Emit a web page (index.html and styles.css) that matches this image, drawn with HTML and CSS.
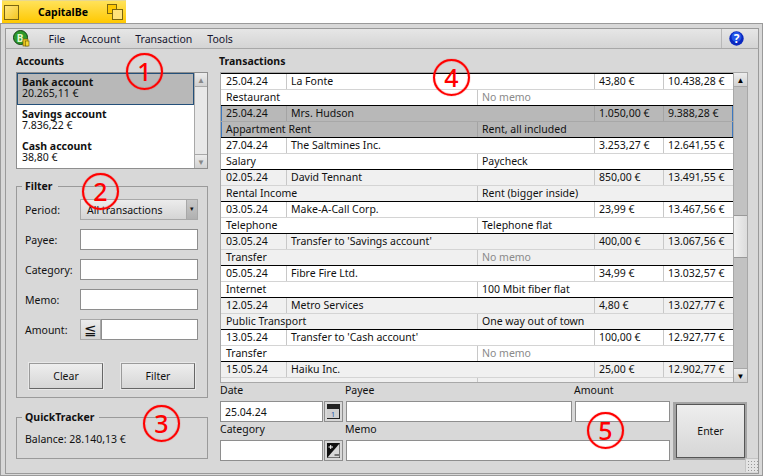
FILE: index.html
```html
<!DOCTYPE html>
<html lang="en">
  <head>
    <meta charset="UTF-8" />
    <meta name="viewport" content="width=device-width, initial-scale=1.0" />
    <title>CapitalBe</title>
    <link rel="stylesheet" href="styles.css">
  </head>
  <body>
    <div class="tab">
      <span class="tab-close"></span>
      <span class="tab-title">CapitalBe</span>
      <svg class="tab-zoom" width="16" height="16" viewBox="0 0 16 16">
        <rect x="0.5" y="0.5" width="9" height="9" fill="#ffc800" stroke="#7a6510" />
        <rect x="5.5" y="5.5" width="10" height="10" fill="#ffe27a" stroke="#7a6510" />
      </svg>
    </div>

    <div class="window">
      <div class="menubar">
        <svg class="app-icon" width="17" height="17" viewBox="0 0 17 17">
          <circle cx="7.5" cy="7.5" r="7" fill="#2f9a2c" stroke="#123f12" />
          <text x="3.8" y="11.5" class="app-letter">B</text>
          <rect x="10" y="9" width="5" height="7" fill="#e5c21c" stroke="#6d5a08" stroke-width="0.6" />
          <rect x="12.5" y="11" width="3.5" height="5" fill="#f4d934" stroke="#6d5a08" stroke-width="0.6" />
        </svg>
        <span class="menu-item">File</span>
        <span class="menu-item">Account</span>
        <span class="menu-item">Transaction</span>
        <span class="menu-item">Tools</span>
        <span class="help">
          <svg width="15" height="15" viewBox="0 0 15 15">
            <circle cx="7.5" cy="7.5" r="7.2" fill="#0a28c0" />
            <circle cx="7.5" cy="6" r="5" fill="#2456e8" />
            <text x="7.5" y="11.5" class="help-mark">?</text>
          </svg>
        </span>
      </div>

      <div class="main">
        <div class="sidebar">
          <div class="heading">Accounts</div>
          <div class="account-list">
            <div class="accounts">
              <div class="account selected"><b>Bank account</b><span>20.265,11 €</span></div>
              <div class="account"><b>Savings account</b><span>7.836,22 €</span></div>
              <div class="account"><b>Cash account</b><span>38,80 €</span></div>
            </div>
            <div class="scrollbar disabled">
              <span class="arrow">▲</span>
              <span class="track"></span>
              <span class="arrow">▼</span>
            </div>
          </div>

          <fieldset class="filter">
            <legend>Filter</legend>
            <div class="filter-row">
              <label>Period:</label>
              <div class="combo"><span class="combo-text">All transactions</span><span class="combo-drop">▾</span></div>
            </div>
            <div class="filter-row"><label>Payee:</label><input type="text" /></div>
            <div class="filter-row"><label>Category:</label><input type="text" /></div>
            <div class="filter-row"><label>Memo:</label><input type="text" /></div>
            <div class="filter-row">
              <label>Amount:</label>
              <span class="compare">≦</span><input type="text" class="amount-input" />
            </div>
            <div class="filter-buttons">
              <button type="button">Clear</button>
              <button type="button">Filter</button>
            </div>
          </fieldset>

          <fieldset class="tracker">
            <legend>QuickTracker</legend>
            Balance: 28.140,13 €
          </fieldset>
        </div>

        <div class="content">
          <div class="heading">Transactions</div>
          <div class="register">
            <div class="rows">
              <div class="trans">
                <div class="top"><span>25.04.24</span><span>La Fonte</span><span>43,80 €</span><span>10.438,28 €</span></div>
                <div class="bottom"><span>Restaurant</span><span class="no-memo">No memo</span></div>
              </div>
              <div class="trans selected">
                <div class="top"><span>25.04.24</span><span>Mrs. Hudson</span><span>1.050,00 €</span><span>9.388,28 €</span></div>
                <div class="bottom"><span>Appartment Rent</span><span>Rent, all included</span></div>
              </div>
              <div class="trans">
                <div class="top"><span>27.04.24</span><span>The Saltmines Inc.</span><span>3.253,27 €</span><span>12.641,55 €</span></div>
                <div class="bottom"><span>Salary</span><span>Paycheck</span></div>
              </div>
              <div class="trans alt">
                <div class="top"><span>02.05.24</span><span>David Tennant</span><span>850,00 €</span><span>13.491,55 €</span></div>
                <div class="bottom"><span>Rental Income</span><span>Rent (bigger inside)</span></div>
              </div>
              <div class="trans">
                <div class="top"><span>03.05.24</span><span>Make-A-Call Corp.</span><span>23,99 €</span><span>13.467,56 €</span></div>
                <div class="bottom"><span>Telephone</span><span>Telephone flat</span></div>
              </div>
              <div class="trans alt">
                <div class="top"><span>03.05.24</span><span>Transfer to 'Savings account'</span><span>400,00 €</span><span>13.067,56 €</span></div>
                <div class="bottom"><span>Transfer</span><span class="no-memo">No memo</span></div>
              </div>
              <div class="trans">
                <div class="top"><span>05.05.24</span><span>Fibre Fire Ltd.</span><span>34,99 €</span><span>13.032,57 €</span></div>
                <div class="bottom"><span>Internet</span><span>100 Mbit fiber flat</span></div>
              </div>
              <div class="trans alt">
                <div class="top"><span>12.05.24</span><span>Metro Services</span><span>4,80 €</span><span>13.027,77 €</span></div>
                <div class="bottom"><span>Public Transport</span><span>One way out of town</span></div>
              </div>
              <div class="trans">
                <div class="top"><span>13.05.24</span><span>Transfer to 'Cash account'</span><span>100,00 €</span><span>12.927,77 €</span></div>
                <div class="bottom"><span>Transfer</span><span class="no-memo">No memo</span></div>
              </div>
              <div class="trans alt">
                <div class="top"><span>15.05.24</span><span>Haiku Inc.</span><span>25,00 €</span><span>12.902,77 €</span></div>
                <div class="bottom"><span></span><span></span></div>
              </div>
            </div>
            <div class="scrollbar">
              <span class="arrow">▲</span>
              <span class="track"><span class="thumb"></span></span>
              <span class="arrow">▼</span>
            </div>
          </div>

          <div class="entry">
            <div class="entry-fields">
              <label class="wide-label">Date</label>
              <label>Payee</label>
              <label>Amount</label>
              <input type="text" class="date-input" value="25.04.24" />
              <span class="icon-btn">
                <svg width="13" height="15" viewBox="0 0 13 15">
                  <rect width="13" height="15" fill="#222" />
                  <rect x="0" y="5" width="12" height="9" fill="#cfcfcf" />
                  <text x="6" y="13" class="cal-day">1</text>
                </svg>
              </span>
              <input type="text" class="payee-input" />
              <input type="text" class="amount-field" />
              <label class="wide-label">Category</label>
              <label class="memo-label">Memo</label>
              <input type="text" class="date-input" />
              <span class="icon-btn">
                <svg width="13" height="15" viewBox="0 0 13 15">
                  <rect width="13" height="15" fill="#d8d8d8" />
                  <path d="M0 0H13L0 15Z" fill="#111" />
                  <path d="M1.5 4H6M3.7 2V6" stroke="#fff" stroke-width="1" />
                  <path d="M7.5 12H12" stroke="#111" stroke-width="1" />
                  <path d="M0 15H13V0" fill="none" stroke="#111" />
                </svg>
              </span>
              <input type="text" class="memo-input" />
            </div>
            <div class="enter-wrap"><button type="button" class="enter">Enter</button></div>
          </div>
        </div>
      </div>
      <div class="resize-corner"></div>
    </div>

    <div class="mark mark-1">1</div>
    <div class="mark mark-2">2</div>
    <div class="mark mark-3">3</div>
    <div class="mark mark-4">4</div>
    <div class="mark mark-5">5</div>
  </body>
</html>
```

FILE: styles.css
```css
* {
  box-sizing: border-box;
}
html,
body {
  height: 100%;
}
body {
  margin: 0;
  width: 763px;
  height: 476px;
  overflow: hidden;
  position: relative;
  background: #fff;
  color: #111;
  font-family: "Noto Sans", sans-serif;
  font-size: 10.5px;
  line-height: 14px;
}
.tab {
  width: 124px;
  height: 23px;
  margin-left: 2px;
  display: flex;
  align-items: center;
  padding: 0 3px 0 2px;
  background: linear-gradient(#ffe25a, #ffc800);
  border-top: 1px solid #e8d890;
}
.tab-close {
  width: 15px;
  height: 15px;
  border: 1px solid #7a6510;
  background: linear-gradient(135deg, #ffe680, #f3c520);
}
.tab-title {
  flex: 1;
  text-align: center;
  font-weight: 700;
  font-size: 10.5px;
  color: #000;
}
.window {
  height: 453px;
  padding: 4px 4px 3px;
  background: #d8d8d8;
  border: 1px solid #9a9a9a;
  position: relative;
}
.menubar {
  height: 21px;
  margin: 0 -1px 0 0;
  display: flex;
  align-items: center;
  padding-left: 7px;
  background: linear-gradient(#e6e6e6, #d4d4d4);
  border: 1px solid #9a9a9a;
  border-bottom-color: #a8a8a8;
}
.app-icon {
  margin-right: 11px;
}
.app-letter {
  font-size: 10px;
  font-weight: 700;
  fill: #e8f8d0;
}
.menu-item {
  margin: 0 7.5px;
  color: #14142e;
}
.help {
  margin-left: auto;
  width: 37px;
  height: 100%;
  display: flex;
  align-items: center;
  padding: 0 0 1px 7px;
  border-left: 1px solid #b8b8b8;
}
.help-mark {
  font-size: 12px;
  font-weight: 700;
  fill: #fff;
  text-anchor: middle;
}
.main {
  height: 425px;
  margin-right: -1px;
  display: flex;
  border: 1px solid #9a9a9a;
  border-top: none;
  padding: 5px 10px 0 10px;
}
.sidebar {
  width: 192px;
  flex: none;
  margin-right: 12px;
}
.content {
  flex: 1;
  min-width: 0;
}
.heading {
  font-weight: 700;
  height: 18px;
  line-height: 14px;
}
.content .heading {
  margin-left: -1px;
}

/* accounts */
.account-list {
  height: 97px;
  display: flex;
  border: 1px solid #8e8e8e;
  background: #fff;
}
.accounts {
  flex: 1;
}
.account {
  height: 32px;
  padding: 4px 5px;
  display: flex;
  flex-direction: column;
  line-height: 11px;
}
.account.selected {
  background: #b8b8b8;
  border: 1px solid #24507a;
  padding: 3px 4px;
}
.scrollbar {
  width: 14px;
  flex: none;
  display: flex;
  flex-direction: column;
  background: #c2c2c2;
  border-left: 1px solid #a8a8a8;
}
.account-list .scrollbar {
  width: 13px;
}
.scrollbar.disabled {
  background: #e8e8e8;
}
.arrow {
  height: 14px;
  flex: none;
  text-align: center;
  font-size: 8px;
  line-height: 14px;
  color: #000;
  background: linear-gradient(#ececec, #d2d2d2);
  border-bottom: 1px solid #a8a8a8;
}
.arrow:last-child {
  border-bottom: none;
  border-top: 1px solid #a8a8a8;
}
.scrollbar.disabled .arrow {
  color: #888;
}
.track {
  flex: 1;
  display: block;
}
.thumb {
  display: block;
  height: 43px;
  margin-top: 128px;
  background: linear-gradient(90deg, #f0f0f0, #dcdcdc);
  border-top: 1px solid #999;
  border-bottom: 1px solid #999;
}

/* filter and tracker boxes */
fieldset {
  margin: 0;
  padding: 0 8px;
  border: 1px solid #9a9a9a;
}
legend {
  padding: 0 5px 0 3px;
  margin-left: -3px;
  font-weight: 700;
  line-height: 14px;
}
.filter {
  height: 219px;
  margin-top: 10px;
}
.filter-row {
  height: 21px;
  margin-bottom: 9px;
  display: flex;
  align-items: center;
}
.filter-row label {
  width: 55px;
  flex: none;
}
.filter-row:first-of-type {
  margin-top: 6px;
}
input {
  display: block;
  height: 21px;
  width: 100%;
  min-width: 0;
  padding: 0 4px;
  font: inherit;
  color: inherit;
  background: #fff;
  border: 1px solid #8e8e8e;
  border-radius: 0;
  outline: none;
}
.filter-row input {
  width: 118px;
}
.filter-row .amount-input {
  width: 97px;
}
.combo {
  width: 118px;
  height: 21px;
  display: flex;
  border: 1px solid #a8a8a8;
  background: linear-gradient(#ececec, #d4d4d4);
}
.combo-text {
  flex: 1;
  padding-left: 6px;
  line-height: 20px;
}
.combo-drop {
  width: 11px;
  text-align: center;
  font-size: 7px;
  line-height: 18px;
  background: linear-gradient(#c8c8c8, #b0b0b0);
  border-left: 1px solid #a8a8a8;
}
.compare {
  width: 21px;
  height: 21px;
  flex: none;
  text-align: center;
  font-size: 15px;
  line-height: 19px;
  background: linear-gradient(#ececec, #d4d4d4);
  border: 1px solid #a8a8a8;
}
.filter-buttons {
  display: flex;
  justify-content: space-between;
  margin: 23px 4px 0 4px;
}
button {
  width: 74px;
  height: 26px;
  padding: 0;
  font: inherit;
  color: inherit;
  background: linear-gradient(#eeeeee, #d6d6d6);
  border: 1px solid;
  border-color: #9a9a9a #666 #666 #9a9a9a;
  box-shadow: 0 0 0 1px #e8e8e8;
}
.tracker {
  height: 49px;
  margin-top: 12px;
  padding-top: 8px;
}

/* register */
.register {
  height: 311px;
  width: 528px;
  display: flex;
  background: #fff;
  border: 1px solid #a8a8a8;
}
.rows {
  flex: 1;
  min-width: 0;
  overflow: hidden;
}
.trans {
  height: 32px;
  border-top: 1px solid #000;
  background: #fff;
  line-height: 15px;
}
.trans.alt {
  background: #f0f0f0;
}
.trans.selected {
  background: #b8b8b8;
  box-shadow: inset 1px 0 0 #3c78c0, inset -1px 0 0 #3c78c0;
}
.top {
  height: 16px;
  display: grid;
  grid-template-columns: 65px 308px 69px 1fr;
  border-bottom: 1px solid #d4d4d4;
}
.trans.selected .top {
  border-bottom-color: #a8a8a8;
}
.bottom {
  height: 15px;
  display: grid;
  grid-template-columns: 256px 1fr;
}
.top span,
.bottom span {
  padding-left: 4px;
  white-space: nowrap;
  overflow: hidden;
  border-left: 1px solid #c8c8c8;
}
.top span:first-child,
.bottom span:first-child {
  padding-left: 5px;
  border-left: none;
}
.trans.selected .top span,
.trans.selected .bottom span {
  border-left-color: #a4a4a4;
}
.trans.selected .top span:first-child,
.trans.selected .bottom span:first-child {
  border-left: none;
}
.no-memo {
  color: #8a8a8a;
}

/* entry form */
.entry {
  display: flex;
  width: 528px;
}
.entry-fields {
  width: 450px;
  flex: none;
  display: grid;
  grid-template-columns: 104px 22px 229px 95px;
  grid-template-rows: 18px 21px 18px 21px;
  align-items: start;
}
.entry-fields label {
  line-height: 14px;
  margin-left: -1px;
}
.wide-label {
  grid-column: 1 / span 2;
}
.entry-fields .wide-label {
  margin-left: 0;
}
.memo-label {
  grid-column: 3 / span 2;
}
.date-input {
  width: 103px;
}
.payee-input {
  width: 226px;
}
.memo-input {
  grid-column: 3 / span 2;
}
.icon-btn {
  width: 19px;
  height: 21px;
  display: flex;
  align-items: center;
  justify-content: center;
  background: #d8d8d8;
  border: 1px solid #8e8e8e;
}
.cal-day {
  font-size: 7px;
  fill: #1d4fa8;
  text-anchor: middle;
}
.enter-wrap {
  margin: 19px 0 0 3px;
  width: 74px;
  height: 58px;
  padding: 2px 2px 2px 3px;
  background: #a4a4a4;
}
.enter {
  width: 100%;
  height: 100%;
  border-color: #555;
  box-shadow: none;
}
.resize-corner {
  position: absolute;
  right: 4px;
  bottom: 3px;
  width: 13px;
  height: 14px;
  background-color: #e4e4e4;
  background-image: radial-gradient(circle, #999 0.8px, transparent 1px);
  background-size: 3px 3px;
  background-position: 1px 1px;
  border: 1px solid #c4c4c4;
  border-right: none;
  border-bottom: none;
}

/* red numbered markers drawn over the window */
.mark {
  position: absolute;
  width: 37px;
  height: 37px;
  border: 2px solid #f00;
  border-radius: 50%;
  box-shadow: 0 0 1px #f00, inset 0 0 1px #f00;
  color: #f00;
  font-size: 25px;
  font-weight: 500;
  line-height: 33px;
  text-align: center;
}
.mark-1 {
  left: 126px;
  top: 53px;
}
.mark-2 {
  left: 82px;
  top: 173px;
}
.mark-3 {
  left: 143px;
  top: 405px;
}
.mark-4 {
  left: 433px;
  top: 59px;
}
.mark-5 {
  left: 587px;
  top: 412px;
}
```
